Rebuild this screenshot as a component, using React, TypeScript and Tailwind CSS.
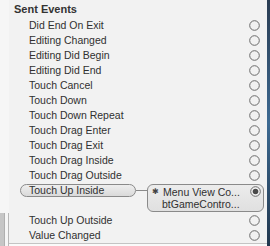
const events = [
  'Did End On Exit',
  'Editing Changed',
  'Editing Did Begin',
  'Editing Did End',
  'Touch Cancel',
  'Touch Down',
  'Touch Down Repeat',
  'Touch Drag Enter',
  'Touch Drag Exit',
  'Touch Drag Inside',
  'Touch Drag Outside',
];

const after = ['Touch Up Outside', 'Value Changed'];

function Ring({ filled = false }: { filled?: boolean }) {
  return (
    <svg width="11" height="11" viewBox="0 0 11 11" className="shrink-0">
      <circle cx="5.5" cy="5.5" r="4.8" fill={filled ? '#f4f4f4' : 'none'} stroke="#6a6a6a" strokeWidth="1" />
      {filled && <circle cx="5.5" cy="5.5" r="2.8" fill="#4a4a4a" />}
    </svg>
  );
}

function EventRow({ label }: { label: string }) {
  return (
    <div className="h-[15px] flex items-center justify-between pl-[20px] pr-[7px]">
      <span>{label}</span>
      <Ring />
    </div>
  );
}

export default function App() {
  return (
    <div
      className="w-[270px] h-[246px] flex bg-[#f2f2f2] text-[#303030] overflow-hidden"
      style={{ fontFamily: '"Liberation Sans", Arial, sans-serif' }}
    >
      {/* left gutter */}
      <div className="w-[9px] flex flex-col bg-[#f6f6f6]">
        <div className="flex-1" />
        <div className="h-[33px] flex">
          <div className="w-[5px] bg-[#c6c6c6] border-r border-[#b0b0b0]" />
          <div className="flex-1 border-r border-[#b8b8b8]" />
        </div>
      </div>

      {/* event list */}
      <div className="flex-1 flex flex-col text-[10.5px] leading-none">
        <div className="h-[18px] flex items-center pl-[5px] pt-[1px] text-[11px] font-bold text-[#333]">
          Sent Events
        </div>
        {events.map((e) => (
          <EventRow key={e} label={e} />
        ))}

        {/* connected event */}
        <div className="h-[30px] flex items-start">
          <div className="h-[15px] flex items-center ml-[11px]">
            <div className="w-[116px] h-[13px] rounded-full border border-[#8a8a8a] bg-gradient-to-b from-[#eeeeee] to-[#dadada] flex items-center pl-[8px]">
              Touch Up Inside
            </div>
            <div className="w-[11px] h-px bg-[#8a8a8a]" />
          </div>
          <div className="mt-[1px] w-[117px] h-[28px] rounded-[6px] border border-[#8a8a8a] bg-gradient-to-b from-[#ececec] to-[#e0e0e0] flex">
            <div className="flex-1 flex flex-col pt-[2px]">
              <div className="h-[12px] flex items-center pl-[4px]">
                <span className="w-[11px] text-[8px] text-[#444]">✱</span>
                <span>Menu View Co...</span>
              </div>
              <div className="h-[15px] flex items-center pl-[14px]">btGameContro...</div>
            </div>
            <div className="pt-[1px] pr-[2px]">
              <Ring filled />
            </div>
          </div>
        </div>

        {after.map((e) => (
          <EventRow key={e} label={e} />
        ))}
        <div className="flex-1 border-t border-[#c4c4c4] bg-[#fafafa]" />
      </div>

      {/* right edge */}
      <div className="w-[3px] bg-gradient-to-b from-[#2a3c52] via-[#3d6a92] to-[#22384f]" />
    </div>
  );
}
